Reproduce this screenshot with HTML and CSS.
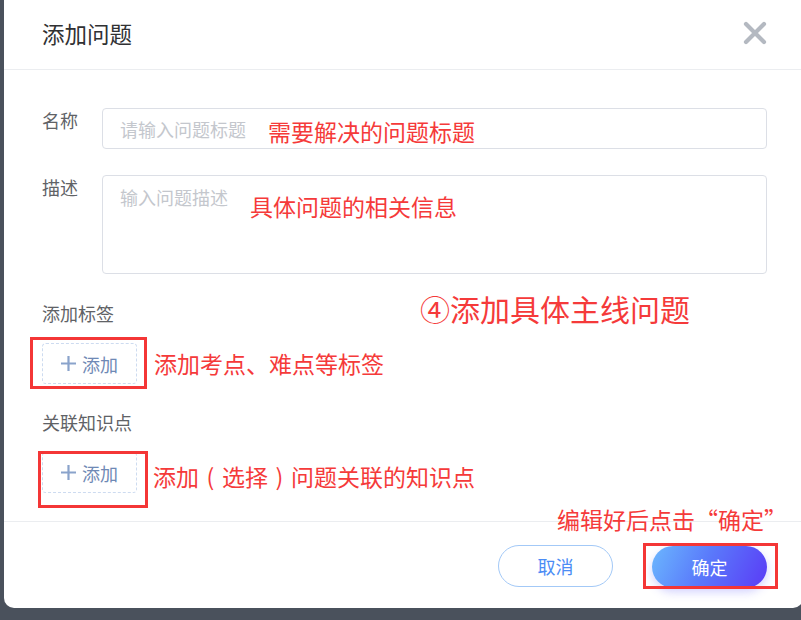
FILE: index.html
```html
<!DOCTYPE html>
<html lang="zh-CN">
<head>
<meta charset="utf-8">
<title>添加问题</title>
<link rel="stylesheet" href="styles.css">
</head>
<body>
<div class="stage">
  <div class="dialog">
    <div class="dialog-header">
      <span class="dialog-title">添加问题</span>
      <svg class="close" width="24" height="24" viewBox="0 0 24 24"><path d="M3 3 L21 21 M21 3 L3 21" stroke="#b4b9c1" stroke-width="4.2" stroke-linecap="round"/></svg>
    </div>
    <div class="dialog-body">
      <div class="row">
        <label class="label">名称</label>
        <input class="input" type="text" placeholder="请输入问题标题">
      </div>
      <div class="row row-desc">
        <label class="label">描述</label>
        <textarea class="textarea" placeholder="输入问题描述"></textarea>
      </div>
      <div class="block-label">添加标签</div>
      <button class="add-btn"><svg width="15" height="15" viewBox="0 0 15 15"><path d="M7.5 0 V15 M0 7.5 H15" stroke="#8aa3cb" stroke-width="2.2"/></svg><span>添加</span></button>
      <div class="block-label">关联知识点</div>
      <button class="add-btn"><svg width="15" height="15" viewBox="0 0 15 15"><path d="M7.5 0 V15 M0 7.5 H15" stroke="#8aa3cb" stroke-width="2.2"/></svg><span>添加</span></button>
    </div>
    <div class="dialog-footer">
      <button class="btn btn-cancel">取消</button>
      <button class="btn btn-ok">确定</button>
    </div>
  </div>

  <div class="note n1">需要解决的问题标题</div>
  <div class="note n2">具体问题的相关信息</div>
  <div class="note n3">④添加具体主线问题</div>
  <div class="note n4">添加考点、难点等标签</div>
  <div class="note n5">添加<span class="paren">(</span>选择<span class="paren">)</span>问题关联的知识点</div>
  <div class="note n6">编辑好后点击“确定”</div>
  <div class="mark m1"></div>
  <div class="mark m2"></div>
  <div class="mark m3"></div>
</div>
</body>
</html>
```
FILE: styles.css
```css
html, body {
  margin: 0;
  padding: 0;
  overflow: hidden;
  background: #4a515c;
  font-family: "Noto Sans CJK SC", "Noto Sans", sans-serif;
}

.stage {
  position: relative;
  width: 801px;
  height: 620px;
  overflow: hidden;
}

.dialog {
  margin-left: 4px;
  width: 799px;
  height: 608px;
  background: #ffffff;
  border-radius: 0 0 10px 10px;
  display: flex;
  flex-direction: column;
}

.dialog-header {
  border-bottom: 1px solid #ebedf0;
  display: flex;
  align-items: center;
  justify-content: space-between;
  padding: 0 36px 0 38px;
  box-sizing: border-box;
  height: 70px;
}

.dialog-title {
  font-size: 22.5px;
  color: #303133;
  line-height: 1;
  margin-top: -2px;
}

.close {
  margin-top: -4px;
}

.dialog-body {
  padding: 38px 36px 0 38px;
  flex: 1;
}

.row {
  display: flex;
  align-items: flex-start;
}

.row-desc {
  margin-top: 26px;
}

.label {
  width: 60px;
  flex: none;
  font-size: 18px;
  line-height: 24px;
  color: #606266;
}

.input {
  flex: 1;
  height: 41px;
  box-sizing: border-box;
  border: 1px solid #dcdfe6;
  border-radius: 4px;
  padding: 0 17px;
  font-size: 18px;
  font-family: inherit;
  color: #606266;
  outline: none;
}

.textarea {
  flex: 1;
  height: 99px;
  box-sizing: border-box;
  border: 1px solid #dcdfe6;
  border-radius: 4px;
  padding: 8px 17px;
  font-size: 18px;
  line-height: 26px;
  font-family: inherit;
  resize: none;
  outline: none;
}

.input::placeholder,
.textarea::placeholder {
  color: #c4c7cd;
}

.block-label {
  font-size: 18px;
  line-height: 26px;
  color: #606266;
  margin-top: 26px;
}

.add-btn {
  margin-top: 17px;
  width: 95px;
  height: 41px;
  box-sizing: border-box;
  border: 1px dashed #cddbf0;
  border-radius: 4px;
  background: #ffffff;
  display: flex;
  align-items: center;
  justify-content: center;
  gap: 6px;
  padding: 0;
  font-family: inherit;
  font-size: 18px;
  color: #6f89b5;
}

.add-btn + .block-label {
  margin-top: 25px;
}

.dialog-footer {
  height: 87px;
  border-top: 1px solid #ebedf0;
  box-sizing: border-box;
  display: flex;
  justify-content: flex-end;
  align-items: flex-start;
  padding: 23px 36px 0 0;
  gap: 39px;
}

.btn {
  width: 115px;
  height: 42px;
  border-radius: 21px;
  font-family: inherit;
  font-size: 18px;
  padding: 0;
}

.btn-cancel {
  background: #ffffff;
  border: 1px solid #a3c9f7;
  color: #4b8cf5;
}

.btn-ok {
  border: none;
  color: #ffffff;
  background: linear-gradient(115deg, #6bb7fe 0%, #5a7bfb 45%, #5a3bf6 100%);
  box-shadow: 0 4px 10px rgba(95, 90, 250, 0.28);
  margin-top: 1px;
}

.note {
  position: absolute;
  color: #f53a3a;
  font-size: 23px;
  line-height: 1;
  white-space: nowrap;
}

.paren {
  display: inline-block;
  width: 1em;
  text-align: center;
}

.n1 { left: 268px; top: 120px; }
.n2 { left: 250px; top: 195px; }
.n3 { left: 420px; top: 293px; font-size: 30px; }
.n4 { left: 154px; top: 352px; }
.n5 { left: 153px; top: 465px; }
.n6 { left: 557px; top: 508px; }

.mark {
  position: absolute;
  border: 3px solid #f43636;
  box-sizing: border-box;
}

.m1 { left: 30px; top: 337px; width: 117px; height: 52px; }
.m2 { left: 38px; top: 451px; width: 110px; height: 57px; }
.m3 { left: 643px; top: 543px; width: 135px; height: 46px; }
```
